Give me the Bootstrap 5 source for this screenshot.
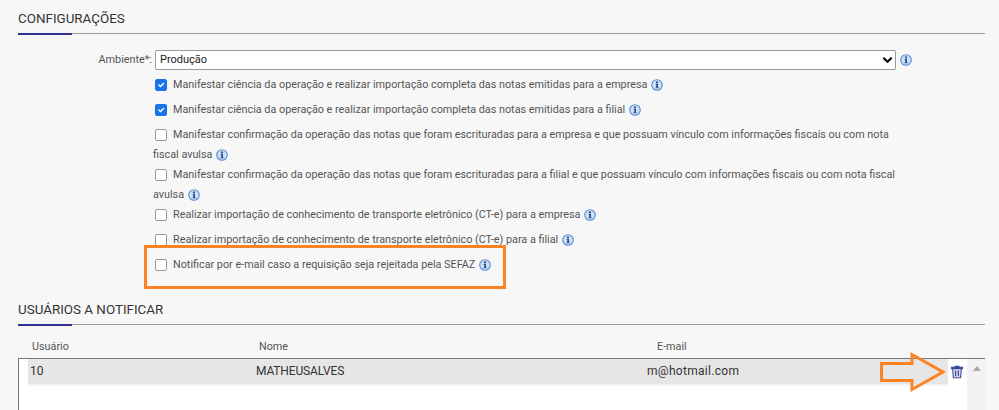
<!DOCTYPE html>
<html lang="pt-BR">
<head>
<meta charset="utf-8">
<title>Configurações</title>
<link rel="stylesheet" href="https://cdn.jsdelivr.net/npm/bootstrap@5.3.0/dist/css/bootstrap.min.css">
<style>
html,body{height:410px;overflow:hidden}
body{background:#f7f7f7;font-family:Roboto,"Liberation Sans",sans-serif;font-size:10.8px;color:#555;position:relative;padding:0 14px 0 18px}
.sec-title{font-size:13.4px;line-height:16px;color:#333;height:34px;padding-top:11px;box-sizing:border-box;border-bottom:1px solid #999;position:relative;margin:0}
.sec-title::after{content:"";position:absolute;left:0;bottom:-2px;width:54px;height:2px;background:#2e3192}
.amb-row{margin-top:16px;height:20px;gap:3px}
.amb-label{width:134px;text-align:right;color:#555;padding-top:2px}
.amb-select{width:741px;height:20px;padding:0 0 0 4px;font-size:11px;line-height:18px;color:#222;border:1px solid #999;border-radius:2px;background-color:#fff;background-image:url("data:image/svg+xml,%3Csvg xmlns='http://www.w3.org/2000/svg' viewBox='0 0 12 8'%3E%3Cpath d='M1.5 1.5 6 6l4.500-4.500' fill='none' stroke='%23000' stroke-width='2.200'/%3E%3C/svg%3E");background-position:right 2px center;background-size:11px 8px;font-family:Roboto,sans-serif}
.amb-select:focus{box-shadow:none;border-color:#999}
.opts{margin-left:135px;width:750px;margin-top:5px}
.opt{line-height:20px;margin-bottom:5px;color:#555}
.opt-wrap{margin-bottom:0}
.opt .form-check-input{width:12px;height:12px;margin:0 6px 0 2px;vertical-align:-2.500px;border:1px solid #999;border-radius:2px;float:none}
.opt .form-check-input:checked{background-color:#1a73e8;border-color:#1a73e8}
.tip{display:inline-block;width:12px;height:12px;vertical-align:-3px;margin-left:1px}
.amb-row .tip{margin:4px 0 0 1px}
.sec2{margin-top:16px}
.grid-head{height:33px;padding:12px 0 0 14px;line-height:20px}
.c-user{width:227px}
.c-name{width:398px}
.grid-wrap{height:60px;border-top:1px solid #777}
.grid-main{flex:1 1 auto;border-left:1px solid #777;background:#fff}
.grid-rowx{height:25px;line-height:24px;color:#333;font-size:12px;padding-left:9px}
.row-cells{background:#e6e6e6;height:25px;padding-left:2px;flex:1 1 auto;box-shadow:0 2px 0 #f3f3f3}
.r-user{width:226px}
.r-name{width:391px;letter-spacing:-.15px}
.r-mail{letter-spacing:.3px}
.del-cell{width:19px;height:27px;display:flex;justify-content:center;padding:6px 2px 0 0;background:#fff}
.scrollcol{width:18px;background:#f2f2f2;position:relative}
.scrollcol::after{content:"";position:absolute;left:6px;top:7px;border:4px solid transparent;border-top:0;border-bottom:5px solid #a8a8a8}
.hi-box{position:absolute;left:144px;top:245px;width:362px;height:44px;border:3px solid #fb8325;pointer-events:none}
.arrow{position:absolute;left:879px;top:351px}
</style>
</head>
<body>
<svg width="0" height="0" class="position-absolute"><defs><symbol id="ic" viewBox="0 0 13 13"><circle cx="6.500" cy="6.500" r="5.700" fill="#cfe0f5" stroke="#5b93d6" stroke-width="1.300"/><circle cx="6.500" cy="3.700" r="1.200" fill="#2e4a8f"/><path d="M5.100 5.500h2.500v3.700h.7v.9H4.800v-.9h.9V6.400h-.6z" fill="#2e4a8f"/></symbol></defs></svg>

<h2 class="sec-title fw-normal">CONFIGURAÇÕES</h2>
<div class="d-flex amb-row">
  <label class="amb-label">Ambiente*:</label>
  <select class="form-select amb-select"><option>Produção</option></select>
  <svg class="tip"><use href="#ic"/></svg>
</div>
<div class="opts">
  <div class="opt"><input class="form-check-input" type="checkbox" checked>Manifestar ciência da operação e realizar importação completa das notas emitidas para a empresa <svg class="tip"><use href="#ic"/></svg></div>
  <div class="opt"><input class="form-check-input" type="checkbox" checked>Manifestar ciência da operação e realizar importação completa das notas emitidas para a filial <svg class="tip"><use href="#ic"/></svg></div>
  <div class="opt opt-wrap"><input class="form-check-input" type="checkbox">Manifestar confirmação da operação das notas que foram escrituradas para a empresa e que possuam vínculo com informações fiscais ou com nota fiscal avulsa <svg class="tip"><use href="#ic"/></svg></div>
  <div class="opt opt-wrap"><input class="form-check-input" type="checkbox">Manifestar confirmação da operação das notas que foram escrituradas para a filial e que possuam vínculo com informações fiscais ou com nota fiscal avulsa <svg class="tip"><use href="#ic"/></svg></div>
  <div class="opt"><input class="form-check-input" type="checkbox">Realizar importação de conhecimento de transporte eletrônico (CT-e) para a empresa <svg class="tip"><use href="#ic"/></svg></div>
  <div class="opt"><input class="form-check-input" type="checkbox">Realizar importação de conhecimento de transporte eletrônico (CT-e) para a filial <svg class="tip"><use href="#ic"/></svg></div>
  <div class="opt"><input class="form-check-input" type="checkbox">Notificar por e-mail caso a requisição seja rejeitada pela SEFAZ <svg class="tip"><use href="#ic"/></svg></div>
</div>
<h2 class="sec-title fw-normal sec2">USUÁRIOS A NOTIFICAR</h2>
<div class="grid-head d-flex"><div class="c-user">Usuário</div><div class="c-name">Nome</div><div>E-mail</div></div>
<div class="grid-wrap d-flex">
  <div class="grid-main">
    <div class="grid-rowx d-flex">
      <div class="row-cells d-flex"><div class="r-user">10</div><div class="r-name">MATHEUSALVES</div><div class="r-mail">m@hotmail.com</div></div>
      <div class="del-cell"><svg width="12" height="14" viewBox="0 0 13 14"><path d="M4.500 1.500V.7h4v.8M.6 2h11.800v1.300H.6zM1.800 3.500l.8 9.800h7.800l.8-9.800z" fill="#dfe2f2" stroke="#3f4a9a" stroke-width="1.200"/><path d="M5 5.500v6M8 5.500v6" stroke="#3f4a9a" stroke-width="1.400"/></svg></div>
    </div>
  </div>
  <div class="scrollcol"></div>
</div>
<div class="hi-box"></div>
<svg class="arrow" width="70" height="42" viewBox="0 0 70 42"><path d="M2.500 12.500H33V3.500L64 21 33 38.500V29.500H2.500z" fill="none" stroke="#fb8325" stroke-width="3"/></svg>
<script src="https://cdn.jsdelivr.net/npm/bootstrap@5.3.0/dist/js/bootstrap.bundle.min.js"></script>
</body>
</html>
